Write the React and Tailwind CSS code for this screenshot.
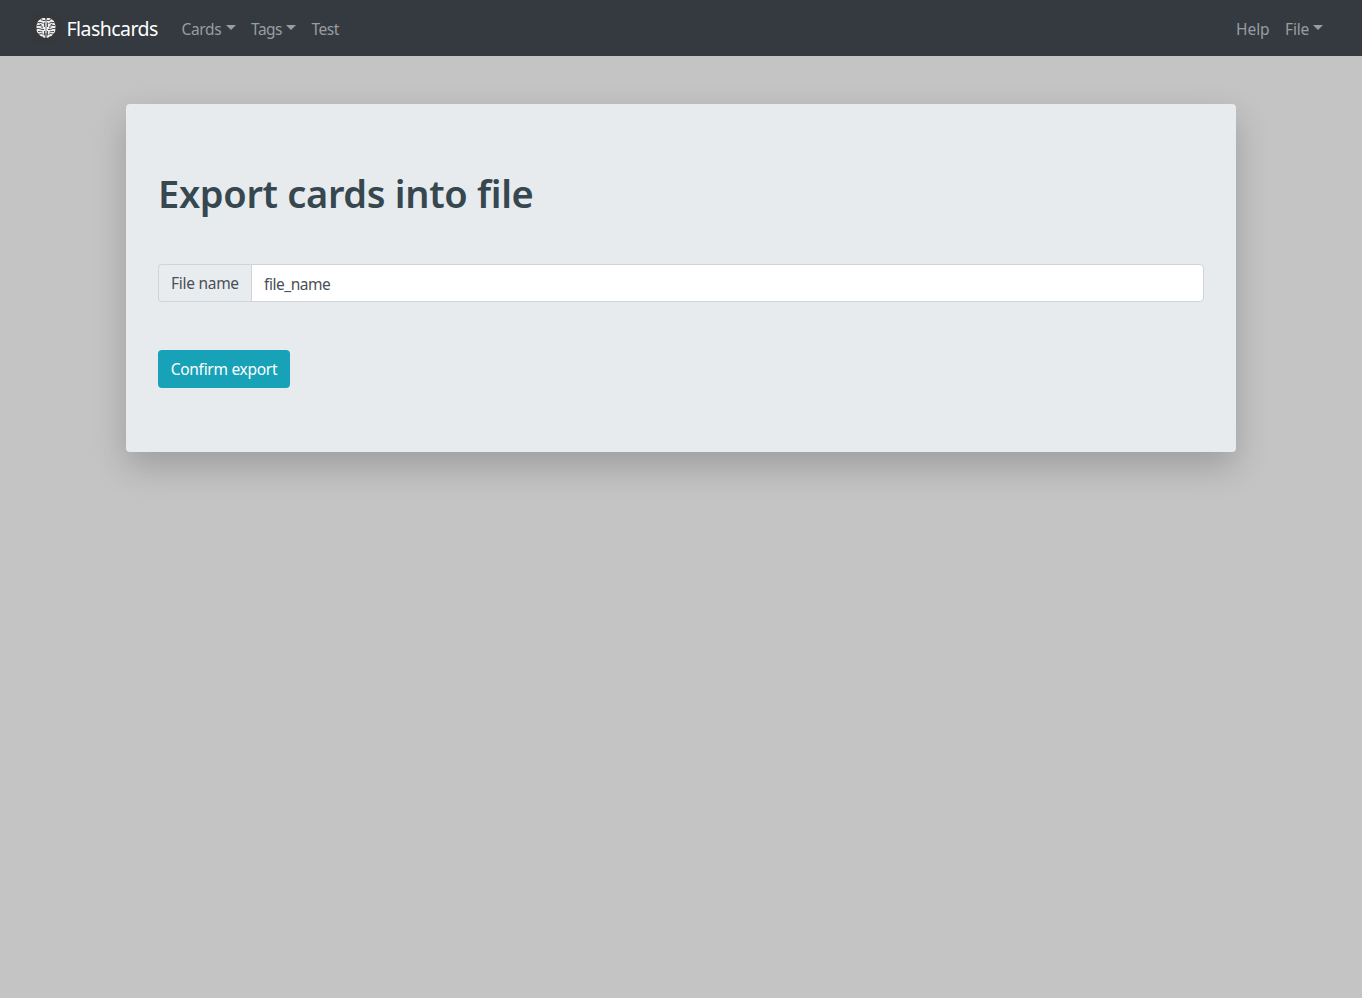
const Caret = () => (
  <span className="mt-[-2px] h-0 w-0 shrink-0 border-x-[5px] border-t-[5px] border-x-transparent border-t-[#9a9da0]" />
);

function NavItem({ label, caret, className }) {
  return (
    <a href="#" className={`flex h-10 items-center pt-px whitespace-nowrap ${className}`}>
      <span className="min-w-0 flex-1">{label}</span>
      {caret && <Caret />}
    </a>
  );
}

function Brain() {
  return (
    <svg className="h-[30px] w-[30px]" viewBox="0 0 30 30" fill="none">
      <rect width="30" height="30" rx="6" fill="#36383b" />
      <path
        d="M14.6 5.4C12.5 4.5 10.4 5.2 9.4 6.4C7.4 6.8 6.5 8.5 6.6 10C5.3 12 5.3 14 5.8 15.4C5.3 17.6 6 19.8 7.6 20.6C8.4 22.8 10.4 23.6 11.6 23.4C12.6 24.8 14 25 14.7 24.8V5.4ZM15.4 5.4C17.5 4.5 19.6 5.2 20.6 6.4C22.6 6.8 23.5 8.5 23.4 10C24.7 12 24.7 14 24.2 15.4C24.7 17.6 24 19.8 22.4 20.6C21.6 22.8 19.6 23.6 18.4 23.4C17.4 24.8 16 25 15.3 24.8V5.4Z"
        fill="#eeeeee"
      />
      <path
        d="M15 4V8M15 20V25.5M10 6.5L12 7.5H14M20 6.5L18 7.5H16M7 9.5H10L12.5 10.5M23 9.5H20L17.5 10.5M6 12.5H9L11.5 13.5M24 12.5H21L18.5 13.5M5.5 15.5H8L11 16.5H13M24.5 15.5H22L19 16.5H17M7 18.5H9.5L11.5 19M23 18.5H20.5L18.5 19M8 21L10.5 20.5L12.5 21.5M22 21L19.5 20.5L17.5 21.5M13.5 9.5V14M16.5 9.5V14M13.5 18V22.5M16.5 18V22.5M8.5 11L10.5 12M21.5 11L19.5 12M10.5 14.5L12 15M19.5 14.5L18 15"
        stroke="#36383b"
        strokeWidth=".85"
      />
    </svg>
  );
}

export default function App() {
  return (
    <div className="min-h-screen bg-[#c4c4c4] font-['Noto_Sans','Open_Sans',sans-serif] text-[15.5px] leading-6 tracking-[-0.28px]">
      <nav className="flex h-14 items-center bg-[#343a40] pr-[39px] pl-[31px] text-[#9a9da0]">
        <a href="#" className="flex w-[150.5px] items-center text-white">
          <Brain />
          <span className="mt-0.5 ml-[5.5px] text-[19.5px] tracking-[-0.55px]">Flashcards</span>
        </a>
        <NavItem label="Cards" caret className="w-[54px] tracking-[-0.35px]" />
        <NavItem label="Tags" caret className="ml-[15.5px] w-[45px] tracking-[-0.5px]" />
        <NavItem label="Test" className="ml-[15.5px] w-7 tracking-[-0.5px]" />
        <NavItem label="Help" className="ml-auto w-[33px] tracking-[-0.05px]" />
        <NavItem label="File" caret className="ml-4 w-[38px] tracking-[-0.15px]" />
      </nav>
      <main className="mx-auto mt-12 h-[348px] w-[1110px] rounded-[4px] bg-[#e7ebee] px-8 pt-16 shadow-[0_14px_34px_rgba(0,0,0,0.2)]">
        <h1 className="h-12 text-[38px] leading-[50px] font-semibold tracking-[-0.32px] whitespace-nowrap text-[#36474f]">Export cards into file</h1>
        <div className="mt-12 flex h-[38px]">
          <label htmlFor="file-name" className="flex w-[93px] items-center rounded-l-[4px] border border-r-0 border-[#ced4da] bg-[#e9ecef] pl-3 whitespace-nowrap text-[#495057]">
            File name
          </label>
          <input
            id="file-name"
            defaultValue="file_name"
            className="min-w-0 flex-1 rounded-r-[4px] border border-[#ced4da] bg-white px-3 pt-px tracking-[-0.45px] text-[#495057] outline-none"
          />
        </div>
        <button className="mt-12 h-[38px] w-[132px] rounded-[4px] bg-[#17a2b8] whitespace-nowrap text-white">Confirm export</button>
      </main>
    </div>
  );
}
